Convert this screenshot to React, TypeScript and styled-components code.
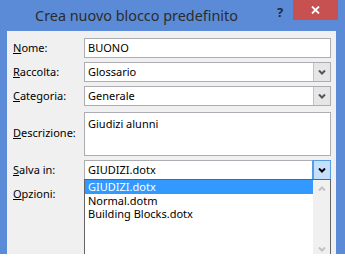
import styled, { createGlobalStyle } from "styled-components";

const GlobalStyle = createGlobalStyle`
  html, body {
    margin: 0;
    background: #ffffff;
  }
  body {
    font-family: "Segoe UI", "Noto Sans", "Liberation Sans", sans-serif;
    color: #000;
  }
`;

const Window = styled.div`
  position: relative;
  height: 254px;
  background: #5b8bd6;
  display: flex;
  flex-direction: column;
`;

const TitleBar = styled.div`
  height: 31px;
  display: flex;
  align-items: flex-start;
  padding-right: 7px;
`;

const Title = styled.div`
  flex: 1;
  text-align: center;
  font-size: 14.4px;
  line-height: 20px;
  padding-top: 6px;
  color: #2b2b2b;
`;

const HelpButton = styled.div`
  width: 14px;
  margin-right: 6px;
  padding-top: 5px;
  font-size: 13px;
  font-weight: bold;
  line-height: 14px;
  text-align: center;
  color: #1e2a40;
`;

const CloseButton = styled.div`
  width: 45px;
  height: 20px;
  background: #c75050;
  display: flex;
  align-items: center;
  justify-content: center;
`;

const Client = styled.div`
  flex: 1;
  margin: 0 9px 0 7px;
  background: #f0f0f0;
  padding: 7px 5px 0 6px;
`;

const Form = styled.div`
  display: grid;
  grid-template-columns: 71px 1fr;
  row-gap: 4px;
  align-items: center;
`;

const Label = styled.div`
  font-size: 11px;
  line-height: 16px;
`;

const Key = styled.span`
  text-decoration: underline;
`;

const Field = styled.div<{ $tall?: boolean }>`
  position: relative;
  height: ${(p) => (p.$tall ? "44px" : "20px")};
  margin-top: ${(p) => (p.$tall ? "2px" : "0")};
  box-sizing: border-box;
  border: 1px solid #abadb3;
  background: #fff;
  display: flex;
  align-items: ${(p) => (p.$tall ? "flex-start" : "center")};
`;

const FieldText = styled.span<{ $tall?: boolean }>`
  flex: 1;
  padding: ${(p) => (p.$tall ? "3px 3px" : "0 3px")};
  font-size: 11px;
  line-height: 16px;
`;

const EmptySlot = styled.div`
  height: 20px;
`;

const DropButton = styled.div<{ $active?: boolean }>`
  width: 17px;
  align-self: stretch;
  box-sizing: border-box;
  border-left: 1px solid ${(p) => (p.$active ? "#569de5" : "#c3c3c3")};
  background: ${(p) => (p.$active ? "#c4e0fc" : "#e6e6e6")};
  outline: ${(p) => (p.$active ? "1px solid #569de5" : "none")};
  display: flex;
  align-items: center;
  justify-content: center;
  color: ${(p) => (p.$active ? "#000" : "#555")};
`;

const List = styled.div`
  position: absolute;
  z-index: 2;
  left: -1px;
  right: -1px;
  top: 100%;
  height: 79px;
  box-sizing: border-box;
  border: 1px solid #646464;
  background: #fff;
  display: flex;
`;

const Items = styled.div`
  flex: 1;
`;

const Item = styled.div<{ $selected?: boolean }>`
  font-size: 11px;
  line-height: 13.5px;
  padding-left: 3px;
  background: ${(p) => (p.$selected ? "#3399ff" : "transparent")};
  color: ${(p) => (p.$selected ? "#fff" : "#000")};
`;

const ScrollBar = styled.div`
  width: 17px;
  background: #f0f0f0;
  display: flex;
  flex-direction: column;
  justify-content: space-between;
  align-items: center;
  padding: 6px 0 5px;
  color: #c2c2c2;
`;

const Chevron = ({ up }: { up?: boolean }) => (
  <svg width="8" height="5" viewBox="0 0 8 5">
    <polyline
      points={up ? "1,4.5 4,1.5 7,4.5" : "1,0.5 4,3.5 7,0.5"}
      fill="none"
      stroke="currentColor"
      strokeWidth="2"
    />
  </svg>
);

const Combo = ({
  value,
  active,
  children,
}: {
  value: string;
  active?: boolean;
  children?: React.ReactNode;
}) => (
  <Field>
    <FieldText>{value}</FieldText>
    <DropButton $active={active}>
      <Chevron />
    </DropButton>
    {children}
  </Field>
);

const App = () => {
  return (
    <>
      <GlobalStyle />
      <Window>
        <TitleBar>
          <Title>Crea nuovo blocco predefinito</Title>
          <HelpButton>?</HelpButton>
          <CloseButton>
            <svg width="9" height="8" viewBox="0 0 9 8">
              <path d="M1 0.5 L8 7.5 M8 0.5 L1 7.5" stroke="#fff" strokeWidth="1.8" />
            </svg>
          </CloseButton>
        </TitleBar>
        <Client>
          <Form>
            <Label>
              <Key>N</Key>ome:
            </Label>
            <Field>
              <FieldText>BUONO</FieldText>
            </Field>

            <Label>
              <Key>R</Key>accolta:
            </Label>
            <Combo value="Glossario" />

            <Label>
              <Key>C</Key>ategoria:
            </Label>
            <Combo value="Generale" />

            <Label>
              <Key>D</Key>escrizione:
            </Label>
            <Field $tall>
              <FieldText $tall>Giudizi alunni</FieldText>
            </Field>

            <Label>
              <Key>S</Key>alva in:
            </Label>
            <Combo value="GIUDIZI.dotx" active>
              <List>
                <Items>
                  <Item $selected>GIUDIZI.dotx</Item>
                  <Item>Normal.dotm</Item>
                  <Item>Building Blocks.dotx</Item>
                </Items>
                <ScrollBar>
                  <Chevron up />
                  <Chevron />
                </ScrollBar>
              </List>
            </Combo>

            <Label>
              <Key>O</Key>pzioni:
            </Label>
            <EmptySlot />
          </Form>
        </Client>
      </Window>
    </>
  );
};

export default App;
